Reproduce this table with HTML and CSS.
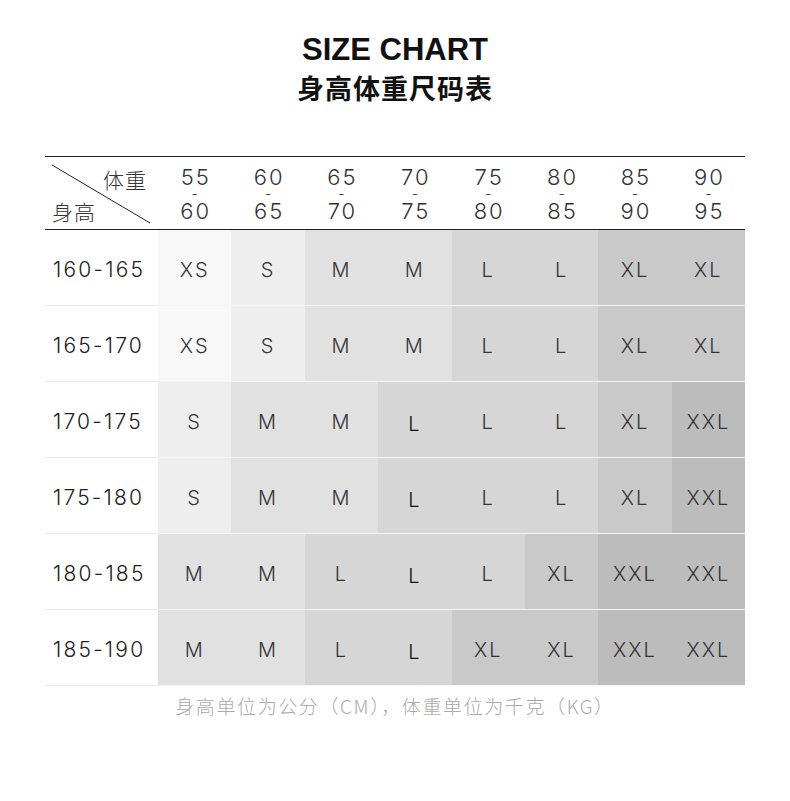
FILE: index.html
```html
<!DOCTYPE html>
<html lang="zh">
<head>
<meta charset="utf-8">
<title>Size Chart</title>
<link rel="stylesheet" href="styles.css">
</head>
<body>
<div class="page">
  <h1 class="title-en">SIZE CHART</h1>
  <h2 class="title-cn">身高体重尺码表</h2>
  <div class="chart">
    <div class="head corner">
      <svg class="diag" width="113" height="72" viewBox="0 0 113 72"><line x1="7" y1="8" x2="105" y2="66" stroke="#222" stroke-width="1"/></svg>
      <span class="c-wt">体重</span>
      <span class="c-ht">身高</span>
    </div>
    <div class="head wt"><span>55</span><span class="dash">-</span><span>60</span></div>
    <div class="head wt"><span>60</span><span class="dash">-</span><span>65</span></div>
    <div class="head wt"><span>65</span><span class="dash">-</span><span>70</span></div>
    <div class="head wt"><span>70</span><span class="dash">-</span><span>75</span></div>
    <div class="head wt"><span>75</span><span class="dash">-</span><span>80</span></div>
    <div class="head wt"><span>80</span><span class="dash">-</span><span>85</span></div>
    <div class="head wt"><span>85</span><span class="dash">-</span><span>90</span></div>
    <div class="head wt"><span>90</span><span class="dash">-</span><span>95</span></div>

    <div class="lbl">160-165</div>
    <div class="cell xs">XS</div><div class="cell s">S</div><div class="cell m">M</div><div class="cell m">M</div><div class="cell l">L</div><div class="cell l">L</div><div class="cell xl">XL</div><div class="cell xl">XL</div>

    <div class="lbl">165-170</div>
    <div class="cell xs">XS</div><div class="cell s">S</div><div class="cell m">M</div><div class="cell m">M</div><div class="cell l">L</div><div class="cell l">L</div><div class="cell xl">XL</div><div class="cell xl">XL</div>

    <div class="lbl">170-175</div>
    <div class="cell s">S</div><div class="cell m">M</div><div class="cell m">M</div><div class="cell l dark">L</div><div class="cell l">L</div><div class="cell l">L</div><div class="cell xl">XL</div><div class="cell xxl">XXL</div>

    <div class="lbl">175-180</div>
    <div class="cell s">S</div><div class="cell m">M</div><div class="cell m">M</div><div class="cell l dark">L</div><div class="cell l">L</div><div class="cell l">L</div><div class="cell xl">XL</div><div class="cell xxl">XXL</div>

    <div class="lbl">180-185</div>
    <div class="cell m">M</div><div class="cell m">M</div><div class="cell l">L</div><div class="cell l dark">L</div><div class="cell l">L</div><div class="cell xl">XL</div><div class="cell xxl">XXL</div><div class="cell xxl">XXL</div>

    <div class="lbl">185-190</div>
    <div class="cell m">M</div><div class="cell m">M</div><div class="cell l">L</div><div class="cell l dark">L</div><div class="cell xl">XL</div><div class="cell xl">XL</div><div class="cell xxl">XXL</div><div class="cell xxl">XXL</div>
  </div>
  <p class="note">身高单位为公分（CM），体重单位为千克（KG）</p>
</div>
</body>
</html>
```
FILE: styles.css
```css
* { box-sizing: border-box; }
html, body { margin: 0; padding: 0; background: #fff; }
body { font-family: "Liberation Sans", "Noto Sans CJK SC", sans-serif; color: #222; }

.page { width: 700px; margin: 0 auto; padding-top: 33px; }

.title-en {
  margin: 0;
  text-align: center;
  font-family: "Liberation Sans", Arial, sans-serif;
  font-weight: 700;
  font-size: 31px;
  line-height: 34px;
  color: #111;
}
.title-cn {
  margin: 3px 0 0;
  text-align: center;
  font-family: "Noto Sans CJK SC", sans-serif;
  font-weight: 700;
  font-size: 27px;
  line-height: 36px;
  letter-spacing: 1px;
  color: #111;
}

.chart {
  margin-top: 50px;
  display: grid;
  grid-template-columns: 113px repeat(8, 1fr);
  border-top: 1px solid #222;
}

.head {
  height: 73px;
  border-bottom: 1px solid #222;
}
.corner { position: relative; font-family: "Noto Sans CJK SC", sans-serif; font-size: 21px; font-weight: 300; color: #333; }
.diag { position: absolute; left: 0; top: 0; }
.c-wt { position: absolute; left: 58px; top: 8px; line-height: 28px; letter-spacing: 1px; }
.c-ht { position: absolute; left: 7px; top: 40px; line-height: 28px; letter-spacing: 1px; }

.wt {
  display: flex;
  flex-direction: column;
  align-items: center;
  justify-content: center;
  font-family: "Inter", "Liberation Sans", sans-serif;
  font-weight: 300;
  font-size: 22px;
  letter-spacing: 2px;
  color: #333;
  padding-top: 1px;
}
.wt span { display: block; padding-left: 2px; line-height: 20px; }
.wt .dash { font-size: 14px; line-height: 14px; }

.lbl {
  height: 76px;
  display: flex;
  align-items: center;
  padding-left: 8px;
  padding-top: 3px;
  border-bottom: 1px solid #e9e9e9;
  font-family: "Inter", "Liberation Sans", sans-serif;
  font-weight: 300;
  font-size: 21px;
  letter-spacing: 2.2px;
  color: #222;
}

.cell {
  height: 76px;
  display: flex;
  align-items: center;
  justify-content: center;
  padding-top: 5px;
  border-bottom: 1px solid #f4f4f4;
  font-family: "Inter", "Liberation Sans", sans-serif;
  font-weight: 300;
  font-size: 20px;
  letter-spacing: 2px;
  color: #333;
}
.cell.dark { color: #111; padding-top: 9px; }

.xs { background: #f8f8f8; }
.s { background: #eeeeee; }
.m { background: #e1e1e1; }
.l { background: #d6d6d6; }
.xl { background: #c9c9c9; }
.xxl { background: #bcbcbc; }

.note {
  margin: 7px 0 0;
  text-align: center;
  font-family: "Noto Sans CJK SC", sans-serif;
  font-size: 19px;
  font-weight: 300;
  line-height: 26px;
  letter-spacing: 1.6px;
  color: #aaa;
}
```
